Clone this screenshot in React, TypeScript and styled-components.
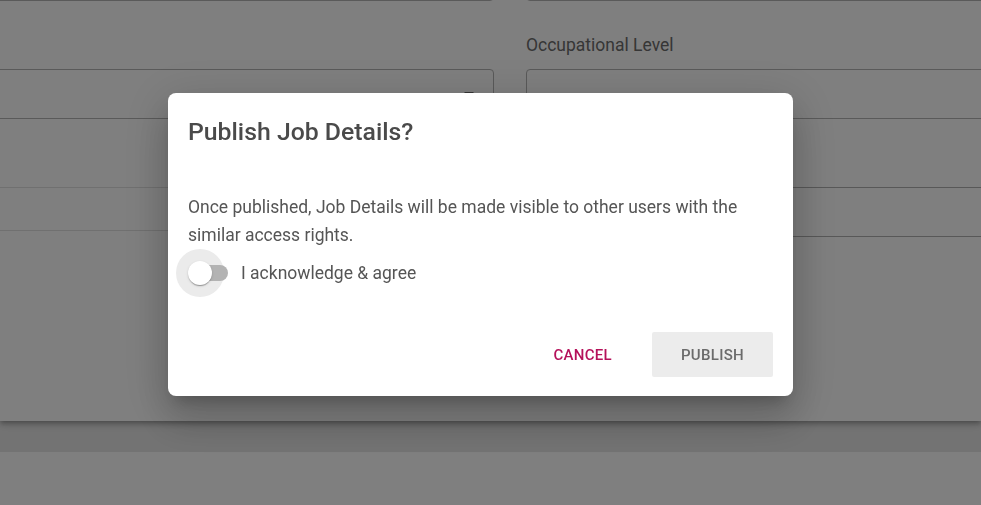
import styled, { createGlobalStyle } from 'styled-components';

const GlobalStyle = createGlobalStyle`
	html, body {
		margin: 0;
		padding: 0;
		height: 100%;
		overflow: hidden;
	}
	body {
		background: #e6e6e6;
		font-family: Roboto, "Liberation Sans", sans-serif;
	}
`;

const Page = styled.div`
	display: flex;
	flex-direction: column;
	height: 100vh;
`;

const Card = styled.section`
	background: #fff;
	margin-top: -49px;
	height: 470px;
	box-shadow: 0 2px 4px -1px rgba(0, 0, 0, 0.2), 0 4px 5px 0 rgba(0, 0, 0, 0.14),
		0 1px 10px 0 rgba(0, 0, 0, 0.12);
	position: relative;
	z-index: 1;
`;

const FormGrid = styled.div`
	display: grid;
	grid-template-columns: 514px 475px;
	column-gap: 32px;
	margin-left: -20px;
`;

const Column = styled.div`
	display: flex;
	flex-direction: column;
`;

const OutlinedBox = styled.div`
	height: 50px;
	box-sizing: border-box;
	border: 1px solid #b4b4b4;
	border-radius: 4px;
	display: flex;
	align-items: center;
	justify-content: flex-end;
	padding-right: 12px;
	color: #6a6a6a;
`;

const FieldLabel = styled.label`
	display: block;
	height: 24px;
	margin: 32px 0 12px 0;
	font-size: 17.5px;
	line-height: 24px;
	color: #6c6c6c;
`;

const UnderlineField = styled.div<{ $height: number; $light?: boolean }>`
	height: ${(p) => p.$height}px;
	box-sizing: border-box;
	border-bottom: 1px solid ${(p) => (p.$light ? '#e0e0e0' : '#b0b0b0')};
`;

const Band = styled.div`
	height: 31px;
`;

const Footer = styled.footer`
	flex: 1;
	background: #fff;
`;

const Backdrop = styled.div`
	position: fixed;
	inset: 0;
	background: rgba(0, 0, 0, 0.5);
	display: flex;
	justify-content: center;
	align-items: flex-start;
	padding: 93px 20px 0 0;
	z-index: 10;
`;

const Dialog = styled.div`
	width: 625px;
	box-sizing: border-box;
	background: #fff;
	border-radius: 8px;
	padding: 22px 20px 19px 20px;
	box-shadow: 0 11px 15px -7px rgba(0, 0, 0, 0.2), 0 24px 38px 3px rgba(0, 0, 0, 0.14),
		0 9px 46px 8px rgba(0, 0, 0, 0.12);
	display: flex;
	flex-direction: column;
`;

const Title = styled.h2`
	margin: 0;
	font-size: 24.8px;
	line-height: 34px;
	font-weight: 500;
	color: #4a4a4a;
`;

const Message = styled.p`
	margin: 44px 0 0 0;
	font-size: 17.5px;
	line-height: 28px;
	color: #555;
`;

const AgreeRow = styled.label`
	display: flex;
	align-items: center;
	gap: 13px;
	margin-left: -12px;
	height: 48px;
	font-size: 17.5px;
	color: #555;
`;

const Switch = styled.span`
	position: relative;
	width: 52px;
	height: 48px;
	flex: none;
`;

const Ripple = styled.span`
	position: absolute;
	left: 0;
	top: 0;
	width: 48px;
	height: 48px;
	border-radius: 50%;
	background: #ebebeb;
`;

const Track = styled.span`
	position: absolute;
	left: 16px;
	top: 16px;
	width: 36px;
	height: 16px;
	border-radius: 8px;
	background: #b3b3b3;
`;

const Thumb = styled.span`
	position: absolute;
	left: 12px;
	top: 12px;
	width: 24px;
	height: 24px;
	border-radius: 50%;
	background: #fff;
	box-shadow: 0 2px 1px -1px rgba(0, 0, 0, 0.2), 0 1px 1px 0 rgba(0, 0, 0, 0.14),
		0 1px 3px 0 rgba(0, 0, 0, 0.12);
`;

const Actions = styled.div`
	display: flex;
	justify-content: flex-end;
	gap: 11px;
	margin-top: 35px;
`;

const Button = styled.button<{ $filled?: boolean }>`
	height: 45px;
	padding: 0 29px;
	border: none;
	border-radius: 2px;
	font-family: Roboto, "Liberation Sans", sans-serif;
	font-size: 15px;
	font-weight: 500;
	letter-spacing: 0.3px;
	text-transform: uppercase;
	cursor: pointer;
	background: ${(p) => (p.$filled ? '#ececec' : 'transparent')};
	color: ${(p) => (p.$filled ? '#6b6b6b' : '#b5115a')};
`;

function DropArrow() {
	return (
		<svg width="24" height="24" viewBox="0 0 24 24" fill="currentColor">
			<path d="M7 10l5 5 5-5z" />
		</svg>
	);
}

export default function App() {
	return (
		<>
			<GlobalStyle />
			<Page>
				<Card>
					<FormGrid>
						<Column>
							<OutlinedBox />
							<FieldLabel />
							<OutlinedBox>
								<DropArrow />
							</OutlinedBox>
							<UnderlineField $height={69} $light />
							<UnderlineField $height={43} $light />
						</Column>
						<Column>
							<OutlinedBox />
							<FieldLabel>Occupational Level</FieldLabel>
							<OutlinedBox />
							<UnderlineField $height={69} />
							<UnderlineField $height={49} />
						</Column>
					</FormGrid>
				</Card>
				<Band />
				<Footer />
			</Page>
			<Backdrop>
				<Dialog role="dialog">
					<Title>Publish Job Details?</Title>
					<Message>
						Once published, Job Details will be made visible to other users with the
						similar access rights.
					</Message>
					<AgreeRow>
						<Switch>
							<Ripple />
							<Track />
							<Thumb />
						</Switch>
						I acknowledge &amp; agree
					</AgreeRow>
					<Actions>
						<Button>Cancel</Button>
						<Button $filled>Publish</Button>
					</Actions>
				</Dialog>
			</Backdrop>
		</>
	);
}
